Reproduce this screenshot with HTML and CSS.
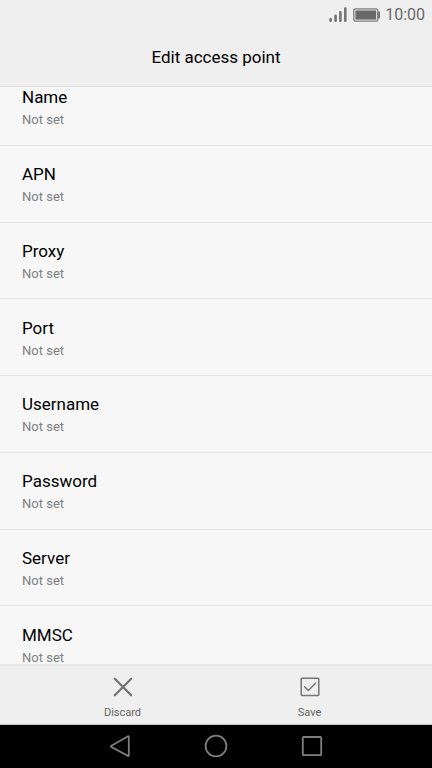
FILE: index.html
```html
<!DOCTYPE html>
<html lang="en">
<head>
<meta charset="utf-8">
<meta name="viewport" content="width=device-width, initial-scale=1">
<title>Edit access point</title>
<link rel="stylesheet" href="styles.css">
</head>
<body>
<div class="status">
  <svg class="signal" width="19" height="16" viewBox="0 0 19 16" aria-hidden="true"><path d="M1.6 12v1.7M6.6 8.9v4.8M11.4 5.2v8.5M16.3 1.5v12.2" /></svg>
  <svg class="battery" width="27" height="14" viewBox="0 0 27 14" aria-hidden="true"><rect class="shell" x=".8" y=".8" width="24" height="12.4" rx="1.6"/><rect class="charge" x="2.4" y="2.4" width="20.8" height="9.2"/><path class="charge" d="M25.2 3.6h.8q1 0 1 1v4.8q0 1-1 1h-.8z"/></svg>
  <span class="time">10:00</span>
</div>
<header class="header"><h1 class="title">Edit access point</h1></header>
<main class="content">
  <ul class="list">
    <li class="row"><button class="item" type="button"><span class="name">Name</span><span class="value">Not set</span></button></li>
    <li class="row"><button class="item" type="button"><span class="name">APN</span><span class="value">Not set</span></button></li>
    <li class="row"><button class="item" type="button"><span class="name">Proxy</span><span class="value">Not set</span></button></li>
    <li class="row"><button class="item" type="button"><span class="name">Port</span><span class="value">Not set</span></button></li>
    <li class="row"><button class="item" type="button"><span class="name">Username</span><span class="value">Not set</span></button></li>
    <li class="row"><button class="item" type="button"><span class="name">Password</span><span class="value">Not set</span></button></li>
    <li class="row"><button class="item" type="button"><span class="name">Server</span><span class="value">Not set</span></button></li>
    <li class="row"><button class="item" type="button"><span class="name">MMSC</span><span class="value">Not set</span></button></li>
  </ul>
</main>
<div class="actions">
  <button class="action" type="button">
    <svg width="20" height="20" viewBox="0 0 20 20" aria-hidden="true"><path d="M1.8 1.8l16.4 16.4M18.2 1.8L1.8 18.2" stroke-width="2.3"/></svg>
    <span>Discard</span>
  </button>
  <button class="action" type="button">
    <svg width="20" height="20" viewBox="0 0 20 20" aria-hidden="true"><rect x="1.2" y="1.2" width="17.6" height="17.2" rx=".8" stroke-width="1.5"/><path d="M4.6 9.7l3.7 3.8 7.2-7.2" stroke-width="1.5"/></svg>
    <span>Save</span>
  </button>
</div>
<nav class="navbar" aria-label="System">
  <button class="nav" type="button" aria-label="Back"><svg width="24" height="24" viewBox="0 0 24 24"><path d="M20.8 2.7v18.8q0 .8-.8.4L3.4 13q-1-.6 0-1.3L20 2.3q.8-.4.8.4z"/></svg></button>
  <button class="nav" type="button" aria-label="Home"><svg width="24" height="24" viewBox="0 0 24 24"><circle cx="12" cy="12" r="10.4"/></svg></button>
  <button class="nav" type="button" aria-label="Recent apps"><svg width="24" height="24" viewBox="0 0 24 24"><rect x="2.8" y="3" width="18.4" height="18.2" rx=".8"/></svg></button>
</nav>
</body>
</html>
```
FILE: styles.css
```css
* {
  box-sizing: border-box;
}

body {
  margin: 0;
  height: 100vh;
  display: flex;
  flex-direction: column;
  background: #f7f7f7;
  color: #000;
  font-family: Roboto, "Liberation Sans", sans-serif;
}

button {
  padding: 0;
  border: 0;
  background: none;
  color: inherit;
  font: inherit;
}

svg {
  display: block;
  fill: none;
  stroke-linecap: round;
  stroke-linejoin: round;
}

.status {
  display: flex;
  align-items: center;
  justify-content: flex-end;
  gap: 5px;
  height: 30px;
  padding-right: 7px;
  background: #efefef;
  color: #696969;
}

.signal {
  stroke: #747474;
  stroke-width: 2.6;
}

.shell {
  stroke: #7c7c7c;
  stroke-width: 1.3;
}

.charge {
  fill: #696969;
}

.time {
  font-size: 16px;
  line-height: 20px;
}

.header {
  display: flex;
  justify-content: center;
  height: 57px;
  padding-top: 15px;
  background: #efefef;
  border-bottom: 1px solid #dedede;
}

.title {
  margin: 0;
  font-size: 17px;
  font-weight: 400;
  line-height: 24px;
}

.content {
  flex: 1;
  min-height: 0;
  overflow: hidden;
}

.list {
  display: grid;
  grid-auto-rows: 1fr;
  min-height: 614px;
  margin: -18px 0 0;
  padding: 0;
  list-style: none;
}

.row {
  display: flex;
  border-bottom: 1px solid #e4e4e4;
}

.item {
  flex: 1;
  display: flex;
  flex-direction: column;
  justify-content: center;
  padding: 3px 22px 0;
  text-align: left;
}

.name {
  font-size: 17px;
  line-height: 24px;
}

.value {
  color: #808080;
  font-size: 13px;
  line-height: 22px;
}

.actions {
  display: flex;
  justify-content: space-evenly;
  height: 61px;
  padding: 0 29px;
  background: #efefef;
  border-top: 2px solid #e8e8e8;
  border-bottom: 1px solid #c8c8c8;
}

.action {
  flex: 1;
  display: flex;
  flex-direction: column;
  align-items: center;
  gap: 8px;
  padding-top: 11px;
  color: #666;
  font-size: 11px;
  line-height: 16px;
}

.action svg {
  stroke: #757575;
}

.navbar {
  display: flex;
  justify-content: center;
  align-items: flex-start;
  gap: 72px;
  height: 43px;
  padding-top: 9px;
  background: #000;
}

.nav svg {
  stroke: #7e7e7e;
  stroke-width: 1.8;
}
```
